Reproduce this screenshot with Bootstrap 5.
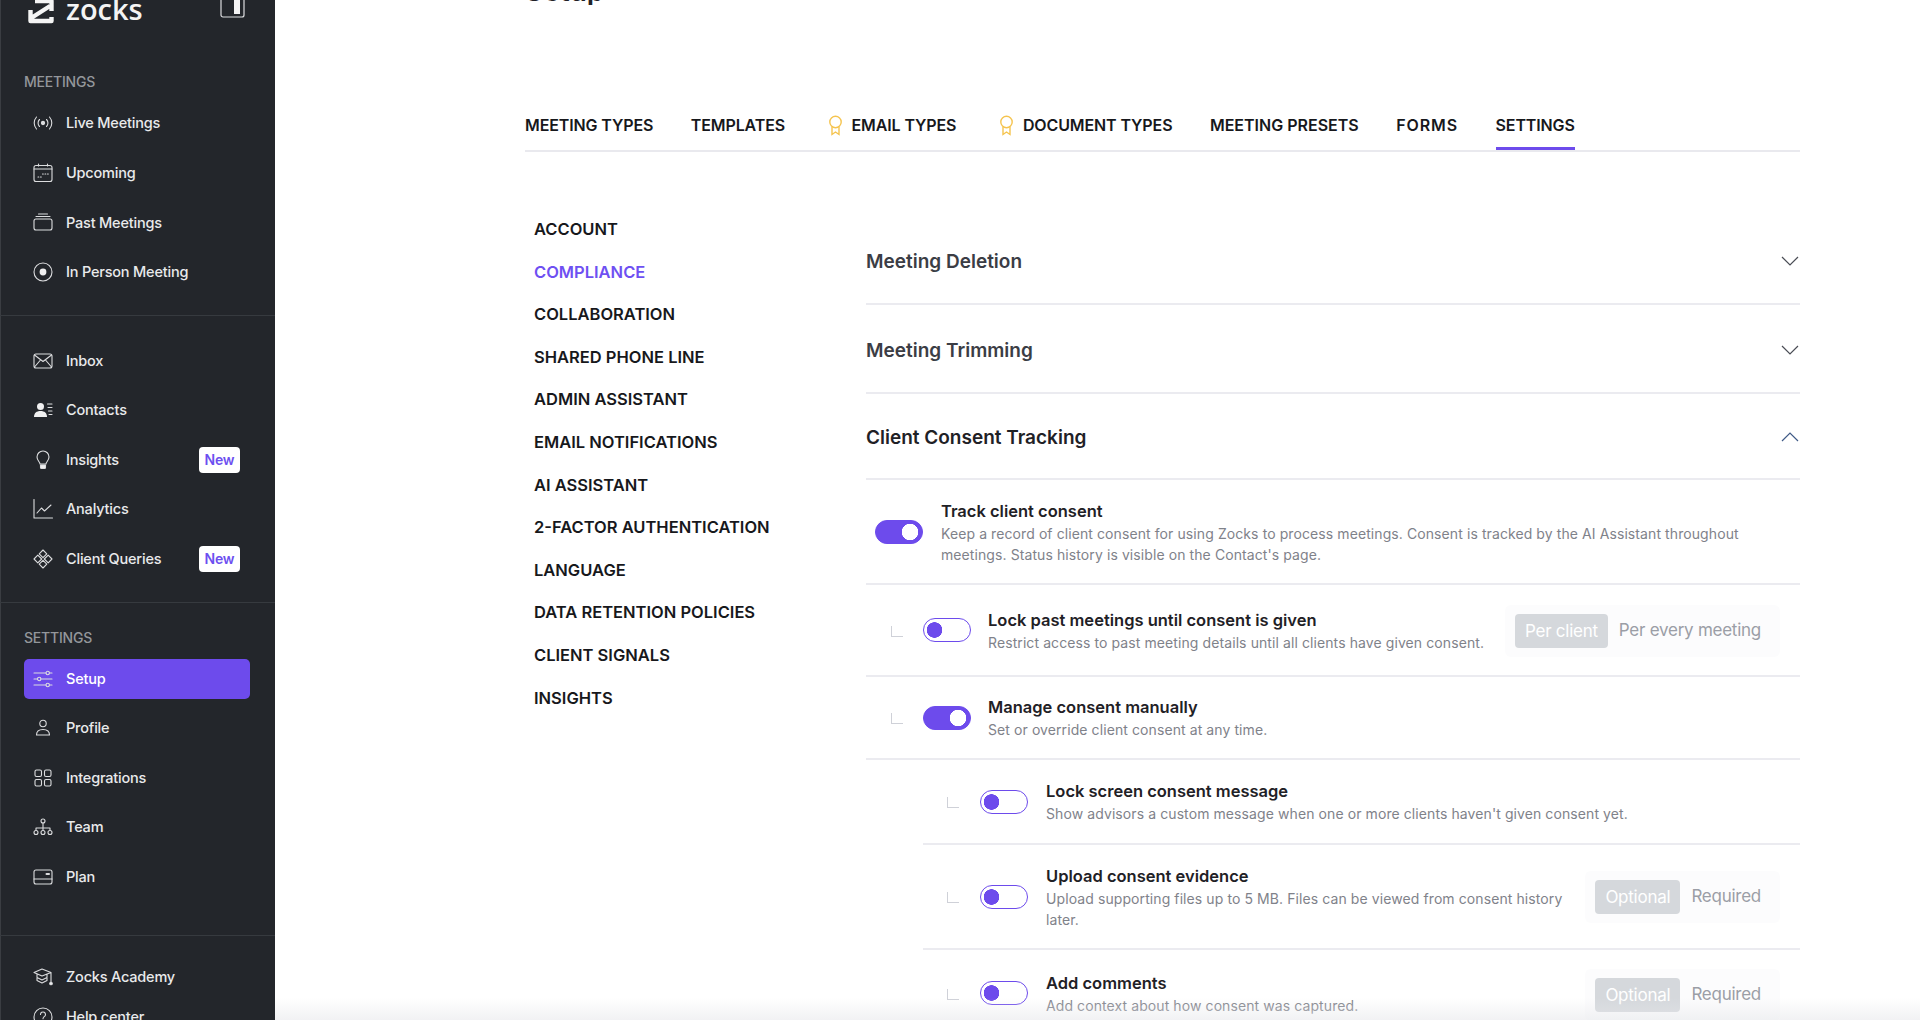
<!DOCTYPE html>
<html lang="en">
<head>
  <meta charset="UTF-8">
  <title>Zocks Setup</title>
  <meta name="viewport" content="width=device-width, initial-scale=1">
  <link href="https://cdn.jsdelivr.net/npm/bootstrap@5.3.0/dist/css/bootstrap.min.css" rel="stylesheet">
  <style>
    html, body { height: 100%; }
    body { font-family: Inter, "Noto Sans", sans-serif; color: #1f2126; background: #fff; overflow: hidden; }

    /* sidebar */
    .sidebar { width: 275px; height: 1020px; flex: none; background: #23262b; color: #e9eaeb; overflow: hidden; box-shadow: inset 1px 0 0 #3a3d42; }
    .sidebar > * { flex: none; }
    .brand { height: 26px; padding: 0 30px 0 28px; overflow: hidden; }
    .brand-logo { width: 26px; height: 26px; margin-bottom: 2px; fill: none; stroke: #f4f4f4; stroke-width: 4.4; stroke-linejoin: round; }
    .brand-mark { font-size: 29px; line-height: 29px; font-weight: 600; color: #f4f4f4; font-family: "Open Sans", sans-serif; margin: 0 0 3px 4px; }
    .brand-toggle { width: 25px; height: 24px; margin-bottom: 5px; }
    .side-section { padding: 0 25px 0 24px; border-bottom: 1px solid #363a3f; }
    .side-section.no-line { border-bottom: 0; padding-top: 21px; }
    .side-label { font-size: 14px; line-height: 20px; font-weight: 500; color: #94979b; letter-spacing: -.2px; }
    .label-meetings { margin-top: 46px; margin-bottom: 6.4px; }
    .label-settings { margin-top: 25.5px; margin-bottom: 5.5px; }
    .pad-meetings { padding-bottom: 18.5px; }
    .pad-tools { padding-top: 19.5px; padding-bottom: 18px; }
    .pad-settings { padding-bottom: 33px; }
    .side-link { height: 40px; margin: 4.8px 0; padding: 0 10px 0 9px; gap: 13px; font-size: 14.5px; font-weight: 500; color: #e9eaeb; text-decoration: none; border-radius: 5px; letter-spacing: -.2px; }
    .side-link.active { background: #6d4bec; color: #fff; }
    .side-link.tight { margin: 0; }
    .side-link svg { width: 20px; height: 20px; flex: none; fill: none; stroke: #dcdddf; stroke-width: 1.1; stroke-linecap: round; stroke-linejoin: round; }
    .new-tag { background: #fff; color: #6c4ff0; font-size: 14px; font-weight: 600; line-height: 26px; padding: 0 5px; border-radius: 4px; width: 41px; text-align: center; letter-spacing: -.2px; }

    /* top tabs */
    .page { min-width: 0; padding: 0 120px 0 250px; position: relative; height: 1020px; overflow: hidden; }
    .page-title { height: 5px; overflow: hidden; font-size: 28px; line-height: 28px; font-weight: 600; }
    .tabs { margin-top: 108px; gap: 37.5px; border-bottom: 2px solid #e9e9ee; }
    .tabs .nav-link { padding: 0 0 10px; font-size: 16px; line-height: 24px; font-weight: 600; color: #17181c; border-bottom: 3px solid transparent; letter-spacing: -.12px; gap: 8px; }
    .tabs .nav-link.active { border-bottom-color: #6d4bec; }
    .tabs .nav-link.mid { letter-spacing: 0; }
    .tabs .nav-link.wide { letter-spacing: .9px; }
    .tabs svg { width: 17px; height: 21px; margin-left: 4px; fill: none; stroke: #f5c44f; stroke-width: 1.4; }

    /* left settings menu */
    .sub-menu { width: 341px; flex: none; padding: 56px 0 0 9px; }
    .sub-menu .nav-link { padding: 0; font-size: 16.5px; line-height: 42.6px; font-weight: 600; color: #17181c; }
    .sub-menu .nav-link.active { color: #6e50f2; }

    /* accordion side */
    .settings { padding-top: 65px; }
    .acc-head { border-bottom: 2px solid #ebebf0; padding-top: 4px; font-size: 19px; line-height: 28px; font-weight: 600; color: #3b3d45; }
    .acc-head.first { height: 88px; }
    .acc-head.second { height: 89px; }
    .acc-head.open { height: 86px; color: #1f2126; }
    .acc-head svg { width: 18px; height: 10px; margin: -2px 1px 0 0; fill: none; stroke: #4a4d55; stroke-width: 1.2; }
    .acc-head.open svg { stroke: #3f5a86; }

    .opt { border-bottom: 2px solid #ebebf0; }
    .opt-title { font-size: 16.5px; line-height: 24px; font-weight: 600; color: #1f2126; }
    .opt-desc { font-size: 14px; line-height: 21px; color: #7f828a; letter-spacing: .09px; }
    .h105 { height: 105px; }
    .h92 { height: 92px; }
    .h83 { height: 83px; }
    .h85 { height: 85px; }
    .last { border-bottom: 0; height: 86px; }
    .nested { margin-left: 57px; }
    .lvl-0 { padding-left: 9px; }
    .lvl-1 { padding-left: 25px; }
    .lvl-2 { padding-left: 24px; }
    .lvl-0 .opt-text { margin-left: 18px; }
    .lvl-1 .opt-text { margin-left: 17px; }
    .lvl-2 .opt-text { margin-left: 18px; }
    .opt-narrow { width: 520px; }
    .elbow { width: 12px; height: 11px; flex: none; border-left: 1.5px solid #cfd1d8; border-bottom: 1.5px solid #cfd1d8; margin: 2px 20px 0 0; }
    .lvl-2 .elbow { margin-right: 21px; }

    .form-switch .form-check-input.tgl { width: 48px; height: 24px; flex: none; margin: 0; border: 1.5px solid #6d4bec; background-color: #fff; background-size: auto; background-position: 0 0; box-shadow: none; --bs-form-switch-bg: radial-gradient(circle 8px at 10.5px 50%, #6d4bec 94%, transparent 100%); }
    .form-switch .form-check-input.tgl:checked { background-color: #6d4bec; background-position: 0 0; --bs-form-switch-bg: radial-gradient(circle 8.5px at 34px 50%, #fff 94%, transparent 100%); }

    .seg { height: 52px; margin-left: auto; margin-right: 20px; padding: 0 19px 0 10px; gap: 11px; background: #fcfcfd; border-radius: 6px; font-size: 17px; color: #9b9ea6; letter-spacing: -.25px; flex: none; }
    .seg .on { background: #d5d8dc; color: #fff; padding: 0 10px; height: 34px; line-height: 34px; border-radius: 4px; }
    .h92 .seg { margin-top: 2px; }
    .last .seg { margin-top: 4px; }

    .page-fade { position: absolute; left: 0; right: 0; bottom: 0; height: 22px; background: linear-gradient(to bottom, rgba(230,231,234,0), rgba(230,231,234,.55)); pointer-events: none; }
  </style>
</head>
<body>

<div class="d-flex">

  <aside class="sidebar d-flex flex-column">
    <div class="brand d-flex align-items-end justify-content-between">
      <div class="d-flex align-items-end gap-2">
        <svg class="brand-logo" viewBox="0 0 26 26"><path d="M2.500 12v11h21v-4M23.500 13V3H7M4 19.500L22 8"/></svg>
        <span class="brand-mark">zocks</span>
      </div>
      <svg class="brand-toggle" viewBox="0 0 25 24" fill="none"><rect x="1" y="-6" width="23" height="26" rx="2" stroke="#dcdddf" stroke-width="1.2"/><rect x="14" y="-4" width="6" height="21" fill="#f4f4f4"/></svg>
    </div>

    <div class="side-section">
      <div class="side-label label-meetings">MEETINGS</div>
      <nav class="nav flex-column pad-meetings">
        <a class="side-link d-flex align-items-center" href="#"><svg viewBox="0 0 20 20"><circle cx="10" cy="10" r="1.600" fill="#dcdddf"/><path d="M6.500 6.500a5 5 0 0 0 0 7M13.500 6.500a5 5 0 0 1 0 7M3.500 4a9 9 0 0 0 0 12M16.500 4a9 9 0 0 1 0 12"/></svg>Live Meetings</a>
        <a class="side-link d-flex align-items-center" href="#"><svg viewBox="0 0 20 20"><rect x="1" y="2.500" width="18" height="16" rx="2"/><path d="M1 6h18M5.500 1v2M14.500 1v2M5 14h.800M7.500 14h.800M9.500 11h.800M12 11h.800M14.500 11h.800"/></svg>Upcoming</a>
        <a class="side-link d-flex align-items-center" href="#"><svg viewBox="0 0 20 20"><rect x="1" y="7" width="18" height="11" rx="2"/><path d="M3 4.500h14M5.500 2h9"/></svg>Past Meetings</a>
        <a class="side-link d-flex align-items-center" href="#"><svg viewBox="0 0 20 20"><circle cx="10" cy="10" r="9"/><circle cx="10" cy="10" r="3.400" fill="#f0f0f1" stroke="none"/></svg>In Person Meeting</a>
      </nav>
    </div>

    <div class="side-section">
      <nav class="nav flex-column pad-tools">
        <a class="side-link d-flex align-items-center" href="#"><svg viewBox="0 0 20 20"><rect x="1" y="3" width="18" height="14" rx="2"/><path d="M1.500 4l8.500 6.500L18.500 4M1.500 16l6-7M18.500 16l-6-7"/></svg>Inbox</a>
        <a class="side-link d-flex align-items-center" href="#"><svg viewBox="0 0 20 20"><circle cx="7.500" cy="6.500" r="3.500" fill="#f0f0f1" stroke="none"/><path d="M1 17c0-4 2.500-6 6.500-6s6.500 2 6.500 6z" fill="#f0f0f1" stroke="none"/><path d="M14.500 4h4.500M15 7.500h4M15.500 11h3.500M16 14.500h3"/></svg>Contacts</a>
        <a class="side-link d-flex align-items-center" href="#"><svg viewBox="0 0 20 20"><path d="M7 14c0-2-3-3.500-3-7a6 6 0 0 1 12 0c0 3.500-3 5-3 7z"/><path d="M7.500 15h5v2.500a1 1 0 0 1-1 1h-3a1 1 0 0 1-1-1z" fill="#f0f0f1"/></svg><span class="flex-grow-1">Insights</span><span class="new-tag">New</span></a>
        <a class="side-link d-flex align-items-center" href="#"><svg viewBox="0 0 20 20"><path d="M1 .500V19h18.500M4 14l4.500-5 3 3L18 6"/></svg>Analytics</a>
        <a class="side-link d-flex align-items-center" href="#"><svg viewBox="0 0 20 20"><path d="M10 1l3.800 3.800L10 8.700 6.200 4.800zM15.200 6.200L19 10l-3.800 3.800L11.300 10zM4.800 6.200L8.700 10l-3.900 3.800L1 10zM10 11.300l3.800 3.900L10 19l-3.800-3.800z"/></svg><span class="flex-grow-1">Client Queries</span><span class="new-tag">New</span></a>
      </nav>
    </div>

    <div class="side-section">
      <div class="side-label label-settings">SETTINGS</div>
      <nav class="nav flex-column pad-settings">
        <a class="side-link active d-flex align-items-center" href="#"><svg viewBox="0 0 20 20"><path d="M1 4h12M16.500 4H19M1 10h3.500M8 10h11M1 16h12M16.500 16H19"/><circle cx="14.700" cy="4" r="1.700"/><circle cx="6.200" cy="10" r="1.700"/><circle cx="14.700" cy="16" r="1.700"/></svg>Setup</a>
        <a class="side-link d-flex align-items-center" href="#"><svg viewBox="0 0 20 20"><circle cx="10" cy="5.500" r="3.200"/><path d="M3.500 17c0-3.500 2.500-5.500 6.500-5.500s6.500 2 6.500 5.500z"/></svg>Profile</a>
        <a class="side-link d-flex align-items-center" href="#"><svg viewBox="0 0 20 20"><rect x="2" y="2" width="6.500" height="6.500" rx="1.500"/><rect x="11.500" y="2" width="6.500" height="6.500" rx="1.500"/><rect x="2" y="11.500" width="6.500" height="6.500" rx="1.500"/><rect x="11.500" y="11.500" width="6.500" height="6.500" rx="1.500"/></svg>Integrations</a>
        <a class="side-link d-flex align-items-center" href="#"><svg viewBox="0 0 20 20"><circle cx="10" cy="4" r="2"/><path d="M10 6v5M3 13v-2h14v2M10 11v2"/><circle cx="3" cy="15.500" r="2"/><circle cx="10" cy="15.500" r="2"/><circle cx="17" cy="15.500" r="2"/></svg>Team</a>
        <a class="side-link d-flex align-items-center" href="#"><svg viewBox="0 0 20 20"><rect x="1" y="3" width="18" height="14" rx="2"/><path d="M1 12h18"/><path d="M13.500 7h2.500" stroke-width="2"/></svg>Plan</a>
      </nav>
    </div>

    <div class="side-section no-line">
      <nav class="nav flex-column">
        <a class="side-link tight d-flex align-items-center" href="#"><svg viewBox="0 0 20 20"><path d="M9 2l9 3.500L9 9 1 5.500zM4 7.500v3L9 13l5-2.500v-3M4 11v2.500L9 16l5-2.500V11M18 5.500V15"/><circle cx="18" cy="16.500" r="1.300" fill="#f0f0f1"/></svg>Zocks Academy</a>
        <a class="side-link tight d-flex align-items-center" href="#"><svg viewBox="0 0 20 20"><circle cx="10" cy="10" r="9"/><path d="M7.500 7.500a2.500 2.500 0 1 1 3.800 2.100c-.9.600-1.300 1-1.300 2.100M10 14.200v.300"/></svg>Help center</a>
      </nav>
    </div>
  </aside>

  <main class="page flex-grow-1">
    <div class="page-title d-flex align-items-end">Setup</div>

    <ul class="nav tabs">
      <li class="nav-item"><a class="nav-link" href="#">MEETING TYPES</a></li>
      <li class="nav-item"><a class="nav-link" href="#">TEMPLATES</a></li>
      <li class="nav-item"><a class="nav-link d-flex align-items-center" href="#"><svg viewBox="0 0 17 21"><circle cx="8.500" cy="7" r="5.700"/><path d="M5 12v7.500l3.500-2.500 3.500 2.500V12"/></svg>EMAIL TYPES</a></li>
      <li class="nav-item"><a class="nav-link d-flex align-items-center" href="#"><svg viewBox="0 0 17 21"><circle cx="8.500" cy="7" r="5.700"/><path d="M5 12v7.500l3.500-2.500 3.500 2.500V12"/></svg>DOCUMENT TYPES</a></li>
      <li class="nav-item"><a class="nav-link mid" href="#">MEETING PRESETS</a></li>
      <li class="nav-item"><a class="nav-link wide" href="#">FORMS</a></li>
      <li class="nav-item"><a class="nav-link active" href="#">SETTINGS</a></li>
    </ul>

    <div class="d-flex">
      <nav class="sub-menu nav flex-column">
        <a class="nav-link" href="#">ACCOUNT</a>
        <a class="nav-link active" href="#">COMPLIANCE</a>
        <a class="nav-link" href="#">COLLABORATION</a>
        <a class="nav-link" href="#">SHARED PHONE LINE</a>
        <a class="nav-link" href="#">ADMIN ASSISTANT</a>
        <a class="nav-link" href="#">EMAIL NOTIFICATIONS</a>
        <a class="nav-link" href="#">AI ASSISTANT</a>
        <a class="nav-link" href="#">2-FACTOR AUTHENTICATION</a>
        <a class="nav-link" href="#">LANGUAGE</a>
        <a class="nav-link" href="#">DATA RETENTION POLICIES</a>
        <a class="nav-link" href="#">CLIENT SIGNALS</a>
        <a class="nav-link" href="#">INSIGHTS</a>
      </nav>

      <section class="settings flex-grow-1">
        <div class="acc-head first d-flex align-items-center justify-content-between">Meeting Deletion <svg viewBox="0 0 18 10"><path d="M1 1l8 8 8-8"/></svg></div>
        <div class="acc-head second d-flex align-items-center justify-content-between">Meeting Trimming <svg viewBox="0 0 18 10"><path d="M1 1l8 8 8-8"/></svg></div>
        <div class="acc-head open d-flex align-items-center justify-content-between">Client Consent Tracking <svg viewBox="0 0 18 10"><path d="M1 9l8-8 8 8"/></svg></div>

        <div class="opt h105 lvl-0 d-flex align-items-center form-switch">
          <input class="form-check-input tgl" type="checkbox" checked>
          <div class="opt-text">
            <div class="opt-title">Track client consent</div>
            <div class="opt-desc">Keep a record of client consent for using Zocks to process meetings. Consent is tracked by the AI Assistant throughout<br>meetings. Status history is visible on the Contact's page.</div>
          </div>
        </div>

        <div class="opt h92 lvl-1 d-flex align-items-center form-switch">
          <span class="elbow"></span>
          <input class="form-check-input tgl" type="checkbox">
          <div class="opt-text">
            <div class="opt-title">Lock past meetings until consent is given</div>
            <div class="opt-desc">Restrict access to past meeting details until all clients have given consent.</div>
          </div>
          <div class="seg d-flex align-items-center"><span class="on">Per client</span><span>Per every meeting</span></div>
        </div>

        <div class="opt h83 lvl-1 d-flex align-items-center form-switch">
          <span class="elbow"></span>
          <input class="form-check-input tgl" type="checkbox" checked>
          <div class="opt-text">
            <div class="opt-title">Manage consent manually</div>
            <div class="opt-desc">Set or override client consent at any time.</div>
          </div>
        </div>

        <div class="nested">
          <div class="opt h85 lvl-2 d-flex align-items-center form-switch">
            <span class="elbow"></span>
            <input class="form-check-input tgl" type="checkbox">
            <div class="opt-text">
              <div class="opt-title">Lock screen consent message</div>
              <div class="opt-desc">Show advisors a custom message when one or more clients haven't given consent yet.</div>
            </div>
          </div>

          <div class="opt h105 lvl-2 d-flex align-items-center form-switch">
            <span class="elbow"></span>
            <input class="form-check-input tgl" type="checkbox">
            <div class="opt-text opt-narrow">
              <div class="opt-title">Upload consent evidence</div>
              <div class="opt-desc">Upload supporting files up to 5 MB. Files can be viewed from consent history later.</div>
            </div>
            <div class="seg d-flex align-items-center"><span class="on">Optional</span><span>Required</span></div>
          </div>

          <div class="opt last lvl-2 d-flex align-items-center form-switch">
            <span class="elbow"></span>
            <input class="form-check-input tgl" type="checkbox">
            <div class="opt-text">
              <div class="opt-title">Add comments</div>
              <div class="opt-desc">Add context about how consent was captured.</div>
            </div>
            <div class="seg d-flex align-items-center"><span class="on">Optional</span><span>Required</span></div>
          </div>
        </div>
      </section>
    </div>
    <div class="page-fade"></div>
  </main>

</div>

<script src="https://cdn.jsdelivr.net/npm/bootstrap@5.3.0/dist/js/bootstrap.bundle.min.js"></script>
</body>
</html>
